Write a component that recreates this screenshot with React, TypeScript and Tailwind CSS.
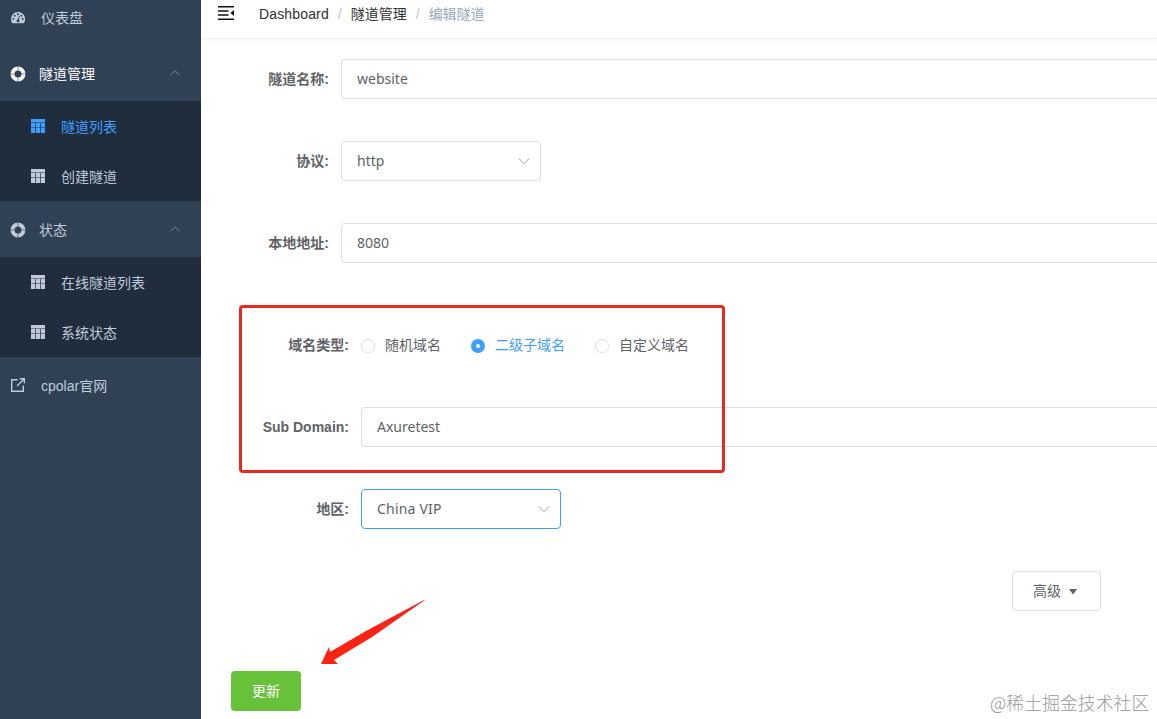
import type { ReactNode } from "react";

type MenuItem = {
  title: string;
  active?: boolean;
};

type LabelProps = {
  children: ReactNode;
  nested?: boolean;
};

function DashboardIcon() {
  return (
    <svg className="h-4 w-4" viewBox="0 0 16 16">
      <path
        fill="currentColor"
        d="M8 2a7 7 0 0 0-7 7c0 1.4.4 2.8 1.1 3.9.2.3.4.4.7.4h10.4c.3 0 .5-.1.7-.4A7 7 0 0 0 8 2Z"
      />
      <g fill="#304156">
        <circle cx="3.3" cy="9" r="1" />
        <circle cx="4.7" cy="5.7" r="1" />
        <circle cx="8" cy="4.3" r="1" />
        <circle cx="11.3" cy="5.7" r="1" />
        <circle cx="12.7" cy="9" r="1" />
        <circle cx="8" cy="10.7" r="1.5" />
      </g>
      <path stroke="#304156" strokeWidth="1" d="m8 10.5 1.3-4.3" />
    </svg>
  );
}

function LifebuoyIcon() {
  return (
    <svg className="h-4 w-4" viewBox="0 0 16 16" fill="none">
      <circle cx="8" cy="8" r="5.5" stroke="currentColor" strokeWidth="4" />
      <path
        stroke="#304156"
        strokeOpacity="0.6"
        strokeWidth="1"
        d="M8 0v4.5M8 11.5V16M0 8h4.5M11.5 8H16"
      />
    </svg>
  );
}

function TableIcon() {
  return (
    <svg className="h-3.5 w-3.5" viewBox="0 0 14 14" fill="currentColor">
      <path d="M0 0h14v3.4H0zM0 4h4.3v4.3H0zM5 4h4v4.3H5zM9.7 4H14v4.3H9.7zM0 8.8h4.3V14H0zM5 8.8h4V14H5zM9.7 8.8H14V14H9.7z" />
    </svg>
  );
}

function LinkIcon() {
  return (
    <svg
      className="h-4 w-4"
      viewBox="0 0 16 16"
      fill="none"
      stroke="currentColor"
      strokeWidth="1.4"
    >
      <path d="M7.5 2.7H1.7v11.6h11.6V8.5M7 9l6.8-6.8M9.7 1.7h4.6v4.6" />
    </svg>
  );
}

function HamburgerIcon() {
  return (
    <svg className="h-4 w-4" viewBox="0 0 16 16" fill="#111">
      <path d="M0 1h16v1.5H0zM0 5.2h10.5v1.5H0zM0 9.3h10.5v1.5H0zM0 13.5h16V15H0zM16 5v6l-3.6-3z" />
    </svg>
  );
}

function Chevron({ up = false }: { up?: boolean }) {
  return (
    <svg
      className={up ? "h-3 w-3 text-[#77879a]" : "h-3.5 w-3.5 text-[#c0c4cc]"}
      viewBox="0 0 14 14"
      fill="none"
      stroke="currentColor"
      strokeWidth="1.1"
    >
      <path d={up ? "m1.8 9.5 5.2-5 5.2 5" : "m1.8 4.5 5.2 5.2 5.2-5.2"} />
    </svg>
  );
}

function MenuGroup({
  title,
  items,
  active = false,
}: {
  title: string;
  items: MenuItem[];
  active?: boolean;
}) {
  return (
    <div>
      <div
        className={`flex h-14 items-center pr-5 pl-2.5 ${active ? "text-white" : ""}`}
      >
        <span className="pt-0.5">
          <LifebuoyIcon />
        </span>
        <span className="ml-[13px] flex-1 pt-0.5">{title}</span>
        <Chevron up />
      </div>

      <div className="bg-[#1f2d3d]">
        {items.map((item) => (
          <div
            key={item.title}
            className={`flex h-[50px] items-center gap-4 pl-[31px] ${item.active ? "text-[#409eff]" : ""}`}
          >
            <TableIcon />
            <span className="pt-0.5">{item.title}</span>
          </div>
        ))}
      </div>
    </div>
  );
}

function Sidebar() {
  return (
    <aside className="w-[201px] shrink-0 bg-[#304156] text-[#bfcbd9]">
      <div className="flex h-[45px] items-start gap-[15px] pt-[7px] pl-2.5">
        <span className="pt-[3px]">
          <DashboardIcon />
        </span>
        <span>仪表盘</span>
      </div>

      <MenuGroup
        title="隧道管理"
        active
        items={[{ title: "隧道列表", active: true }, { title: "创建隧道" }]}
      />
      <MenuGroup
        title="状态"
        items={[{ title: "在线隧道列表" }, { title: "系统状态" }]}
      />

      <div className="flex h-14 items-center gap-[15px] pl-2.5">
        <LinkIcon />
        <span className="pt-0.5">cpolar官网</span>
      </div>
    </aside>
  );
}

function Navbar() {
  return (
    <header className="flex h-[39px] items-start border-b border-[#f3f4f6] pt-[5px] pl-[17px] shadow-[0_1px_3px_rgba(0,21,41,0.05)]">
      <HamburgerIcon />
      <nav className="-mt-0.5 ml-[25px] flex text-[#303133]">
        <span className="tracking-[0.15px]">Dashboard</span>
        <span className="mx-[9px] text-[#c0c4cc]">/</span>
        <span>隧道管理</span>
        <span className="mx-[9px] text-[#c0c4cc]">/</span>
        <span className="text-[#97a8be]">编辑隧道</span>
      </nav>
    </header>
  );
}

function Label({ children, nested = false }: LabelProps) {
  return (
    <div
      className={`shrink-0 pr-3 text-right font-bold ${nested ? "w-40" : "w-[140px]"}`}
    >
      {children}
    </div>
  );
}

function TextField({ value }: { value: string }) {
  return (
    <div className="flex h-10 flex-1 items-center rounded-l border border-r-0 border-[#dcdfe6] px-[15px] font-['Noto_Sans',sans-serif]">
      {value}
    </div>
  );
}

function SelectField({
  value,
  focused = false,
}: {
  value: string;
  focused?: boolean;
}) {
  return (
    <div
      className={`flex h-10 w-[200px] items-center justify-between rounded border pr-[9px] pl-[15px] font-['Noto_Sans',sans-serif] ${focused ? "border-[#409eff] tracking-[0.2px]" : "border-[#dcdfe6]"}`}
    >
      {value}
      <Chevron />
    </div>
  );
}

function Radio({ label, checked = false }: { label: string; checked?: boolean }) {
  return (
    <div
      className={`mr-[30px] flex items-center gap-2.5 ${checked ? "text-[#409eff]" : ""}`}
    >
      <span
        className={`mt-0.5 h-3.5 w-3.5 rounded-full ${checked ? "border-5 border-[#409eff]" : "border border-[#dcdfe6]"}`}
      />
      {label}
    </div>
  );
}

export default function App() {
  return (
    <div className="relative flex h-[719px] w-[1157px] overflow-hidden bg-white font-['Liberation_Sans','Noto_Sans_CJK_SC',sans-serif] text-sm leading-[22px] text-[#606266]">
      <Sidebar />

      <main className="flex flex-1 flex-col">
        <Navbar />

        <div className="flex flex-col gap-[42px] pt-5">
          <div className="flex h-10 items-center">
            <Label>隧道名称:</Label>
            <TextField value="website" />
          </div>

          <div className="flex h-10 items-center">
            <Label>协议:</Label>
            <SelectField value="http" />
          </div>

          <div className="flex h-10 items-center">
            <Label>本地地址:</Label>
            <TextField value="8080" />
          </div>

          <div className="mt-5 flex h-10 items-center">
            <Label nested>域名类型:</Label>
            <Radio label="随机域名" />
            <Radio label="二级子域名" checked />
            <Radio label="自定义域名" />
          </div>

          <div className="flex h-10 items-center">
            <Label nested>Sub Domain:</Label>
            <TextField value="Axuretest" />
          </div>

          <div className="flex h-10 items-center">
            <Label nested>地区:</Label>
            <SelectField value="China VIP" focused />
          </div>

          <div className="flex justify-end pr-14">
            <button className="flex h-10 w-[89px] items-center gap-2 rounded border border-[#dcdfe6] pl-5">
              高级
              <svg className="mt-0.5 h-1.5 w-2" viewBox="0 0 8 6">
                <path fill="#606266" d="M0 0h8L4 5.5z" />
              </svg>
            </button>
          </div>
        </div>

        <button className="mt-[60px] ml-[30px] h-10 w-[70px] rounded bg-[#67c23a] text-white">
          更新
        </button>
      </main>

      <div className="absolute top-[305px] left-[239px] h-[168px] w-[486px] rounded border-3 border-[#e8291c]" />

      <svg
        className="absolute top-[598px] left-[318px] h-[68px] w-[108px]"
        viewBox="0 0 108 68"
      >
        <path fill="#fa2314" d="M106 2 48 33 12 54l-1-5L3 66h17l-4-4 38-23 53-37Z" />
      </svg>

      <div className="absolute top-[691px] left-[990px] font-['Noto_Sans_CJK_SC',sans-serif] text-[17.9px] font-light whitespace-nowrap text-[#999]">
        @稀土掘金技术社区
      </div>
    </div>
  );
}
